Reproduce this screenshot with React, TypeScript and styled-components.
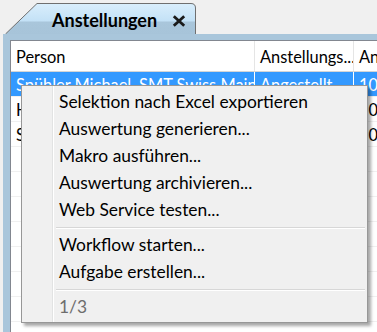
import styled, { createGlobalStyle } from 'styled-components';

const GlobalStyle = createGlobalStyle`
  body {
    margin: 0;
    background: #f0f0f0;
    font-family: Lato, "Liberation Sans", sans-serif;
  }
`;

interface Employee {
  name: string;
  status: string;
  percent: string;
}

const employees: Employee[] = [
  { name: 'Spühler Michael, SMT Swiss Maintenance', status: 'Angestellt', percent: '100' },
  { name: 'Huber Andrea, SMT Swiss Maintenance', status: 'Angestellt', percent: '100' },
  { name: 'Schmid Peter, SMT Swiss Maintenance', status: 'Angestellt', percent: '100' },
  { name: '', status: '', percent: '' },
  { name: '', status: '', percent: '' },
  { name: '', status: '', percent: '' },
  { name: '', status: '', percent: '' },
  { name: '', status: '', percent: '' },
  { name: '', status: '', percent: '' },
  { name: '', status: '', percent: '' },
];

const menuGroups = [
  [
    'Selektion nach Excel exportieren',
    'Auswertung generieren...',
    'Makro ausführen...',
    'Auswertung archivieren...',
    'Web Service testen...',
  ],
  ['Workflow starten...', 'Aufgabe erstellen...'],
];

const TabShape = () => (
  <TabBackground width="191" height="31" viewBox="0 0 191 31">
    <defs>
      <linearGradient id="tabFill" x1="0" y1="0" x2="0" y2="1">
        <stop offset="0" stopColor="#d9eefc" />
        <stop offset="0.58" stopColor="#c3e1f6" />
        <stop offset="0.6" stopColor="#a9c6db" />
        <stop offset="1" stopColor="#a7c4d9" />
      </linearGradient>
    </defs>
    <path
      d="M0.5 31 L32 0.5 H186 Q190.5 0.5 190.5 5 V31"
      fill="url(#tabFill)"
      stroke="#6f6f6f"
      strokeWidth="1"
    />
  </TabBackground>
);

const CloseIcon = () => (
  <CloseGlyph width="14" height="12" viewBox="0 0 14 12">
    <path d="M1.8 1.2 L12.2 10.8 M12.2 1.2 L1.8 10.8" stroke="#1a1a1a" strokeWidth="2.8" />
  </CloseGlyph>
);

const App = () => {
  return (
    <>
      <GlobalStyle />
      <Screen>
        <TabStrip>
          <Tab>
            <TabShape />
            <TabLabel>Anstellungen</TabLabel>
            <CloseIcon />
          </Tab>
        </TabStrip>
        <Panel>
          <Grid>
            <HeaderRow>
              <HeaderCell $width={244}>Person</HeaderCell>
              <HeaderCell $width={99}>Anstellungs...</HeaderCell>
              <HeaderCell>Anstellungsgrad</HeaderCell>
            </HeaderRow>
            {employees.map((emp, i) => (
              <Row key={i} $selected={i === 0}>
                <Cell $width={244} $selected={i === 0}>{emp.name}</Cell>
                <Cell $width={99} $selected={i === 0}>{emp.status}</Cell>
                <Cell $selected={i === 0}>{emp.percent}</Cell>
              </Row>
            ))}
          </Grid>
        </Panel>
        <ContextMenu>
          {menuGroups.map((group, gi) => (
            <MenuGroup key={gi}>
              {group.map((label) => (
                <MenuItem key={label}>{label}</MenuItem>
              ))}
              <Separator />
            </MenuGroup>
          ))}
          <MenuItem $disabled>1/3</MenuItem>
        </ContextMenu>
      </Screen>
    </>
  );
};

export default App;

const Screen = styled.div`
  position: relative;
  display: flex;
  flex-direction: column;

  width: 377px;
  height: 332px;
  overflow: hidden;

  background: #f0f0f0;
`;

const TabStrip = styled.div`
  display: flex;
  align-items: flex-end;

  height: 34px;
  padding-left: 5px;
`;

const Tab = styled.div`
  position: relative;
  display: flex;
  align-items: center;
  gap: 15px;

  width: 191px;
  height: 31px;
  padding-left: 47px;
  box-sizing: border-box;
`;

const TabBackground = styled.svg`
  position: absolute;
  left: 0;
  top: 0;
  z-index: 0;
`;

const TabLabel = styled.span`
  position: relative;
  font-size: 18px;
  font-weight: 700;
  color: #000;
  padding-top: 2px;
`;

const CloseGlyph = styled.svg`
  position: relative;
  margin-top: 4px;
`;

const Panel = styled.div`
  display: flex;
  flex: 1;

  margin-left: 3px;
  padding: 6px 0 0 7px;

  background: #a9c6db;
`;

const Grid = styled.div`
  display: flex;
  flex-direction: column;
  flex: 1;

  border-top: 1px solid #828790;
  border-left: 1px solid #828790;
  background: #fff;
  font-size: 16.4px;
`;

const HeaderRow = styled.div`
  display: flex;
  height: 30px;
  border-bottom: 1px solid #d5d5d5;
`;

const HeaderCell = styled.div<{ $width?: number }>`
  display: flex;
  align-items: center;
  flex: ${({ $width }) => ($width ? `0 0 ${$width}px` : '1')};

  box-sizing: border-box;
  padding-left: 5px;
  border-right: 1px solid #e5e5e5;
  white-space: nowrap;
  overflow: hidden;
  color: #000;
`;

const Row = styled.div<{ $selected?: boolean }>`
  display: flex;
  height: 25px;
  box-sizing: border-box;
  border-bottom: 1px solid #f0f0f0;
  background: ${({ $selected }) => ($selected ? '#3399ff' : '#fff')};
`;

const Cell = styled.div<{ $width?: number; $selected?: boolean }>`
  display: flex;
  align-items: center;
  flex: ${({ $width }) => ($width ? `0 0 ${$width}px` : '1')};

  box-sizing: border-box;
  padding-left: 5px;
  border-right: 1px solid ${({ $selected }) => ($selected ? '#fff' : '#f0f0f0')};
  white-space: nowrap;
  overflow: hidden;
  color: ${({ $selected }) => ($selected ? '#fff' : '#000')};
`;

const ContextMenu = styled.div`
  position: absolute;
  left: 21px;
  top: 85px;

  display: flex;
  flex-direction: column;

  width: 347px;
  padding: 2px;
  box-sizing: border-box;

  border: 1px solid #979797;
  background: linear-gradient(
    to right,
    #f0f0f0 0 30px,
    #e2e3e3 30px 31px,
    #ffffff 31px 32px,
    #f0f0f0 32px
  );
  box-shadow: 3px 3px 3px rgba(0, 0, 0, 0.35);
  font-size: 17.4px;
`;

const MenuGroup = styled.div`
  display: flex;
  flex-direction: column;
`;

const MenuItem = styled.div<{ $disabled?: boolean }>`
  height: 27px;
  line-height: 27px;
  padding-left: 35px;
  white-space: nowrap;
  color: ${({ $disabled }) => ($disabled ? '#6d6d6d' : '#000')};
`;

const Separator = styled.div`
  height: 1px;
  margin: 4px 0 2px 32px;
  background: #d7d7d7;
  border-bottom: 1px solid #fff;
`;
